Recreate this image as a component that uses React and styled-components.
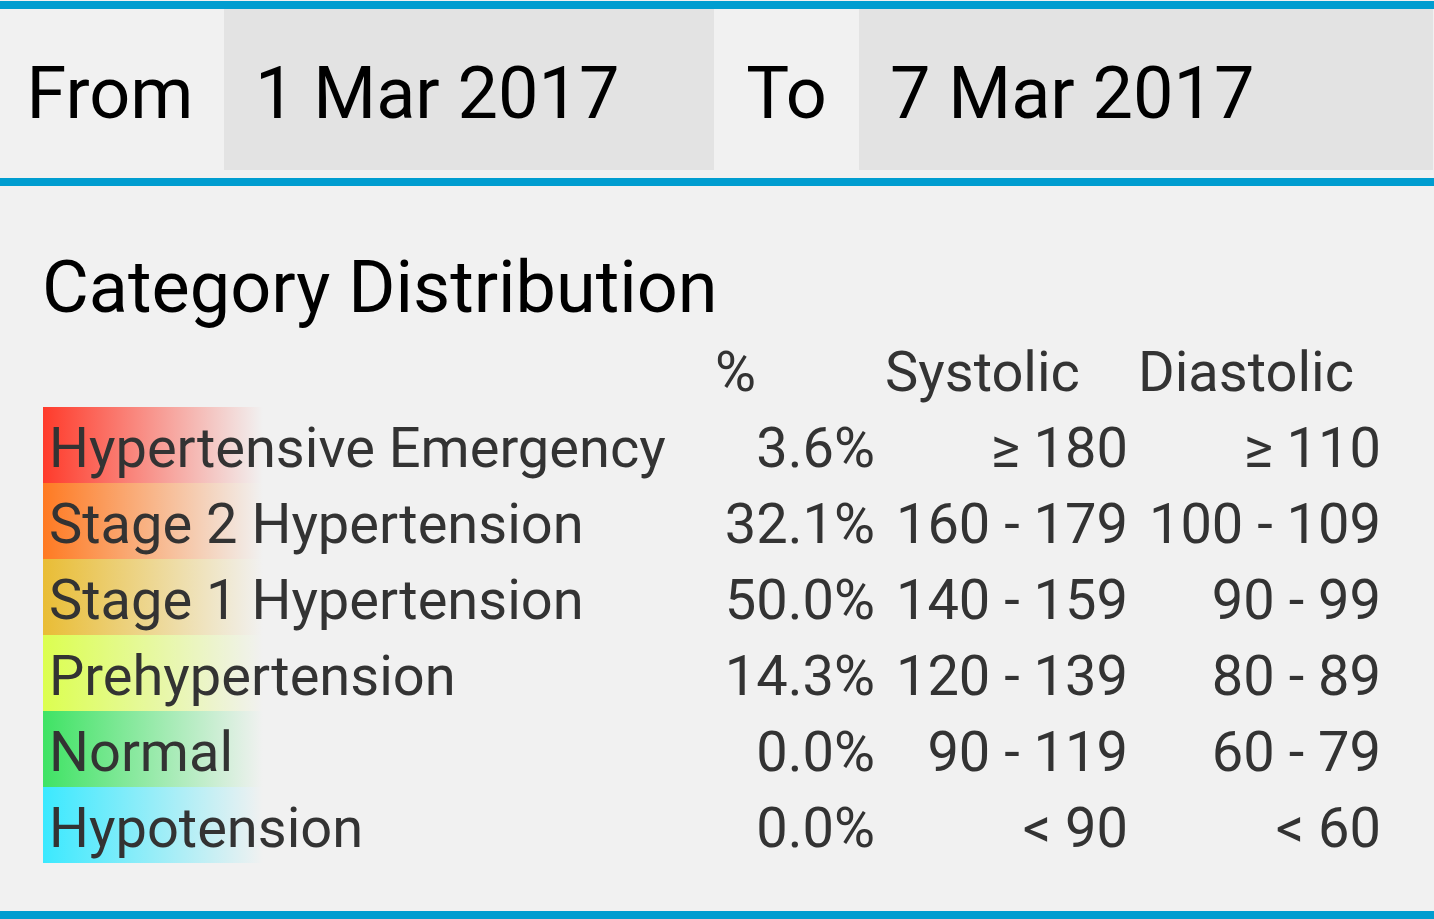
import React from "react";
import styled, { createGlobalStyle } from "styled-components";

const categories = [
  { name: "Hypertensive Emergency", color: "255, 59, 43", pct: "3.6%", sys: "≥ 180", dia: "≥ 110" },
  { name: "Stage 2 Hypertension", color: "255, 122, 34", pct: "32.1%", sys: "160 - 179", dia: "100 - 109" },
  { name: "Stage 1 Hypertension", color: "233, 189, 53", pct: "50.0%", sys: "140 - 159", dia: "90 - 99" },
  { name: "Prehypertension", color: "220, 255, 80", pct: "14.3%", sys: "120 - 139", dia: "80 - 89" },
  { name: "Normal", color: "63, 227, 100", pct: "0.0%", sys: "90 - 119", dia: "60 - 79" },
  { name: "Hypotension", color: "59, 233, 255", pct: "0.0%", sys: "< 90", dia: "< 60" },
];

const App = () => {
  return (
    <>
      <GlobalStyle />
      <Page>
        <Toolbar>
          <RangeLabel>From</RangeLabel>
          <DateBox $width="490px">1 Mar 2017</DateBox>
          <RangeLabel $width="145px">To</RangeLabel>
          <DateBox>7 Mar 2017</DateBox>
        </Toolbar>

        <Content>
          <Heading>Category Distribution</Heading>
          <Table>
            <span />
            <HeadCell>%</HeadCell>
            <HeadCell>Systolic</HeadCell>
            <HeadCell>Diastolic</HeadCell>
            {categories.map((c) => (
              <React.Fragment key={c.name}>
                <NameCell $color={c.color}>{c.name}</NameCell>
                <ValueCell>{c.pct}</ValueCell>
                <ValueCell>{c.sys}</ValueCell>
                <ValueCell>{c.dia}</ValueCell>
              </React.Fragment>
            ))}
          </Table>
        </Content>
      </Page>
    </>
  );
};

export default App;

const GlobalStyle = createGlobalStyle`
  html, body {
    margin: 0;
    padding: 0;
    background: #f1f1f1;
  }
  body {
    font-family: Roboto, "Noto Sans", "Liberation Sans", sans-serif;
  }
`;

const Page = styled.div`
  width: 1434px;
  height: 919px;
  box-sizing: border-box;
  padding-top: 1px;
  display: flex;
  flex-direction: column;
  background: #f1f1f1;
`;

const Toolbar = styled.header`
  display: flex;
  height: 161px;
  border-top: 8px solid #009dd0;
  border-bottom: 8px solid #009dd0;
  padding-bottom: 8px;
`;

const RangeLabel = styled.div`
  width: ${({ $width }) => $width || "224px"};
  flex-shrink: 0;
  display: flex;
  align-items: center;
  justify-content: center;
  box-sizing: border-box;
  padding: 9px ${({ $width }) => ($width ? "0" : "4px")} 0 0;
  font-size: 72px;
  line-height: 72px;
  color: #000;
`;

const DateBox = styled.div`
  width: ${({ $width }) => $width || "auto"};
  flex: ${({ $width }) => ($width ? "0 0 auto" : "1")};
  margin-right: ${({ $width }) => ($width ? "0" : "1px")};
  display: flex;
  align-items: center;
  box-sizing: border-box;
  padding: 9px 0 0 31px;
  background: #e3e3e3;
  font-size: 72px;
  line-height: 72px;
  color: #000;
`;

const Content = styled.main`
  flex: 1;
  padding: 66px 0 0 43px;
  border-bottom: 8px solid #009dd0;
`;

const Heading = styled.h1`
  margin: 0 0 9px -1px;
  font-size: 72px;
  line-height: 72px;
  font-weight: 400;
  color: #000;
`;

const Table = styled.div`
  display: grid;
  grid-template-columns: 662px 160px 243px 243px;
  grid-template-rows: 74px repeat(6, 76px);
  column-gap: 10px;
  font-size: 56px;
  color: #333;
`;

const cell = `
  box-sizing: border-box;
  padding-top: 6px;
  line-height: 70px;
  white-space: nowrap;
`;

const HeadCell = styled.div`
  ${cell}
  padding-top: 4px;
  text-align: left;
`;

const NameCell = styled.div`
  ${cell}
  padding-left: 6px;
  background-image: linear-gradient(
    to right,
    rgba(${({ $color }) => $color}, 1) 0%,
    rgba(${({ $color }) => $color}, 0.55) 45%,
    rgba(${({ $color }) => $color}, 0) 100%
  );
  background-size: 220px 100%;
  background-repeat: no-repeat;
`;

const ValueCell = styled.div`
  ${cell}
  text-align: right;
  padding-right: 0;
`;
